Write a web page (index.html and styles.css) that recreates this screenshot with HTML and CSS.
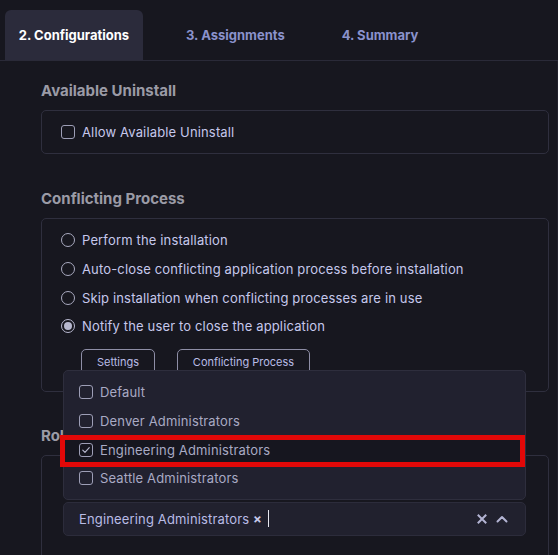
FILE: index.html
```html
<!DOCTYPE html>
<html lang="en">
<head>
<meta charset="utf-8">
<title>Configurations</title>
<link rel="stylesheet" href="styles.css">
</head>
<body>
<div class="page">
  <nav class="tabs">
    <div class="tab active">2. Configurations</div>
    <div class="tab">3. Assignments</div>
    <div class="tab">4. Summary</div>
  </nav>
  <main class="content">
    <section class="section">
      <h2 class="title">Available Uninstall</h2>
      <div class="box box-single">
        <label class="row"><span class="check"></span><span class="label">Allow Available Uninstall</span></label>
      </div>
    </section>

    <section class="section">
      <h2 class="title">Conflicting Process</h2>
      <div class="box box-list">
        <label class="row"><span class="radio"></span><span class="label">Perform the installation</span></label>
        <label class="row"><span class="radio"></span><span class="label">Auto-close conflicting application process before installation</span></label>
        <label class="row"><span class="radio"></span><span class="label">Skip installation when conflicting processes are in use</span></label>
        <label class="row"><span class="radio on"></span><span class="label">Notify the user to close the application</span></label>
        <div class="buttons">
          <button class="btn btn-settings">Settings</button>
          <button class="btn btn-process">Conflicting Process</button>
        </div>
      </div>
    </section>

    <section class="section">
      <h2 class="title">Roles</h2>
      <div class="box box-roles">
        <div class="roles-spacer"></div>
        <div class="select-wrap">
          <ul class="menu">
            <li class="option"><span class="check small"></span><span>Default</span></li>
            <li class="option"><span class="check small"></span><span>Denver Administrators</span></li>
            <li class="option selected"><span class="check small checked"><svg viewBox="0 0 14 14" width="14" height="14"><path d="M3.2 7.2 L5.8 9.8 L10.8 4.2" fill="none" stroke="#b9bad0" stroke-width="1.3" stroke-linecap="round" stroke-linejoin="round"/></svg></span><span>Engineering Administrators</span></li>
            <li class="option"><span class="check small"></span><span>Seattle Administrators</span></li>
          </ul>
          <div class="select">
            <span class="chip">Engineering Administrators <span class="chip-x">×</span></span>
            <span class="caret"></span>
            <span class="select-icons">
              <svg class="icon-x" viewBox="0 0 10 10" width="10" height="10"><path d="M1.5 1.5 L8.5 8.5 M8.5 1.5 L1.5 8.5" stroke="#b3b4d3" stroke-width="2" stroke-linecap="square"/></svg>
              <svg class="icon-up" viewBox="0 0 12 8" width="12" height="8"><path d="M1.5 6.5 L6 2 L10.5 6.5" fill="none" stroke="#b3b4d3" stroke-width="2" stroke-linecap="round" stroke-linejoin="round"/></svg>
            </span>
          </div>
        </div>
      </div>
    </section>
  </main>
</div>
</body>
</html>
```

FILE: styles.css
```css
* { box-sizing: border-box; }
html, body { margin: 0; padding: 0; }
body {
  background: #17171f;
  font-family: Inter, "Noto Sans", sans-serif;
  color: #c6c8ec;
  width: 558px;
  height: 555px;
  overflow: hidden;
}
.page { height: 555px; overflow: hidden; }

.tabs {
  display: flex;
  gap: 29px;
  height: 61px;
  padding: 10px 0 0 5px;
  border-bottom: 1px solid #2a2a38;
}
.tab {
  height: 50px;
  padding: 0 14px;
  display: flex;
  align-items: center;
  font-size: 13px;
  font-weight: 700;
  color: #8a92cc;
  white-space: nowrap;
}
.tab.active {
  background: #2b2b3b;
  color: #ffffff;
  border-radius: 6px 6px 0 0;
  width: 138px;
  justify-content: center;
  padding: 0;
}

.content {
  padding: 20px 8px 0 41px;
  border-right: 1px solid #20202b;
  height: 494px;
}
.section { margin-bottom: 34px; }
.section:first-child { margin-bottom: 35px; }
.title {
  margin: 0 0 9px;
  font-size: 15px;
  line-height: 20px;
  font-weight: 700;
  color: #9b9ba6;
}
.box {
  border: 1px solid #2f2f3e;
  border-radius: 5px;
}
.box-single {
  height: 44px;
  padding: 0 19px;
  display: flex;
  align-items: center;
}
.box-list {
  padding: 7px 19px 16px;
}
.row {
  display: flex;
  align-items: center;
  height: 28.67px;
  gap: 7px;
  font-size: 13px;
  letter-spacing: 0.15px;
}
.label { color: #c6c8ec; }
.check {
  width: 14px;
  height: 14px;
  border: 1.5px solid #9d9eb6;
  border-radius: 3px;
  flex: none;
  display: inline-flex;
  align-items: center;
  justify-content: center;
}
.radio {
  width: 14px;
  height: 14px;
  border: 1.5px solid #a9aac0;
  border-radius: 50%;
  flex: none;
  position: relative;
}
.radio.on { border-color: #b7b8cf; }
.radio.on::after {
  content: "";
  position: absolute;
  inset: 2px;
  border-radius: 50%;
  background: #b7b8cf;
}
.buttons {
  display: flex;
  gap: 22px;
  padding-left: 20px;
  margin-top: 8px;
}
.btn {
  height: 26px;
  background: transparent;
  border: 1px solid #8e8ea6;
  border-radius: 5px;
  color: #b9bce6;
  font-family: inherit;
  font-size: 11px;
  padding: 0;
}
.btn-settings { width: 74px; }
.btn-process { width: 133px; }

.box-roles {
  padding: 13px 22px 20px 21px;
  height: 120px;
}
.roles-spacer { height: 33px; }
.select-wrap { position: relative; }
.select {
  height: 34px;
  background: #21212e;
  border: 1px solid #2c2c3b;
  border-radius: 5px;
  display: flex;
  align-items: center;
  padding: 0 15px;
  font-size: 13px;
  letter-spacing: 0.15px;
}
.chip { color: #b9bce6; white-space: nowrap; }
.chip-x { color: #c6c8e8; font-weight: 700; }
.caret {
  width: 1px;
  height: 17px;
  background: #e8e8f0;
  margin-left: 6px;
}
.select-icons {
  margin-left: auto;
  display: flex;
  align-items: center;
  gap: 9px;
  padding-right: 2px;
}

.menu {
  position: absolute;
  left: 0;
  right: 0;
  bottom: calc(100% + 2px);
  margin: 0;
  padding: 7px 0 6px;
  list-style: none;
  background: #21212f;
  border: 1px solid #2e2e3d;
  border-radius: 5px;
  z-index: 5;
}
.option {
  height: 28.67px;
  display: flex;
  align-items: center;
  gap: 7px;
  padding-left: 15px;
  font-size: 13px;
  letter-spacing: 0.15px;
  color: #a9aac4;
  position: relative;
}
.option.selected { background: #16161f; }
.option.selected::after {
  content: "";
  position: absolute;
  left: -4px;
  right: 0;
  top: 0;
  bottom: -3px;
  border: 5px solid #e20808;
}
```
